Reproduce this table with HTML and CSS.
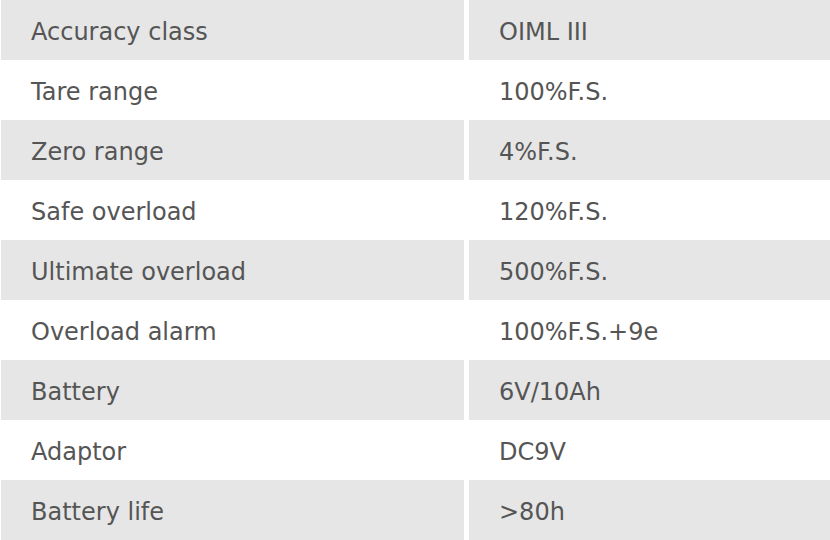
FILE: index.html
```html
<!DOCTYPE html>
<html>
<head>
<meta charset="utf-8">
<link rel="stylesheet" href="styles.css">
</head>
<body>
<div class="spec">
  <div class="row alt"><div class="k">Accuracy class</div><div class="v">OIML III</div></div>
  <div class="row"><div class="k">Tare range</div><div class="v">100%F.S.</div></div>
  <div class="row alt"><div class="k">Zero range</div><div class="v">4%F.S.</div></div>
  <div class="row"><div class="k">Safe overload</div><div class="v">120%F.S.</div></div>
  <div class="row alt"><div class="k">Ultimate overload</div><div class="v">500%F.S.</div></div>
  <div class="row"><div class="k">Overload alarm</div><div class="v">100%F.S.+9e</div></div>
  <div class="row alt"><div class="k">Battery</div><div class="v">6V/10Ah</div></div>
  <div class="row"><div class="k">Adaptor</div><div class="v">DC9V</div></div>
  <div class="row alt"><div class="k">Battery life</div><div class="v">&gt;80h</div></div>
</div>
</body>
</html>
```
FILE: styles.css
```css
html, body {
  margin: 0;
  padding: 0;
  background: #ffffff;
}
.spec {
  display: flex;
  flex-direction: column;
  padding-left: 1px;
  font-family: "DejaVu Sans", sans-serif;
  font-size: 24px;
  color: #555555;
}
.row {
  display: grid;
  grid-template-columns: 463px 1fr;
  column-gap: 5px;
  height: 60px;
}
.k, .v {
  display: flex;
  align-items: center;
  padding-left: 30px;
  padding-top: 4px;
  box-sizing: border-box;
  white-space: nowrap;
}
.row.alt .k, .row.alt .v {
  background: #e6e6e6;
}
```
